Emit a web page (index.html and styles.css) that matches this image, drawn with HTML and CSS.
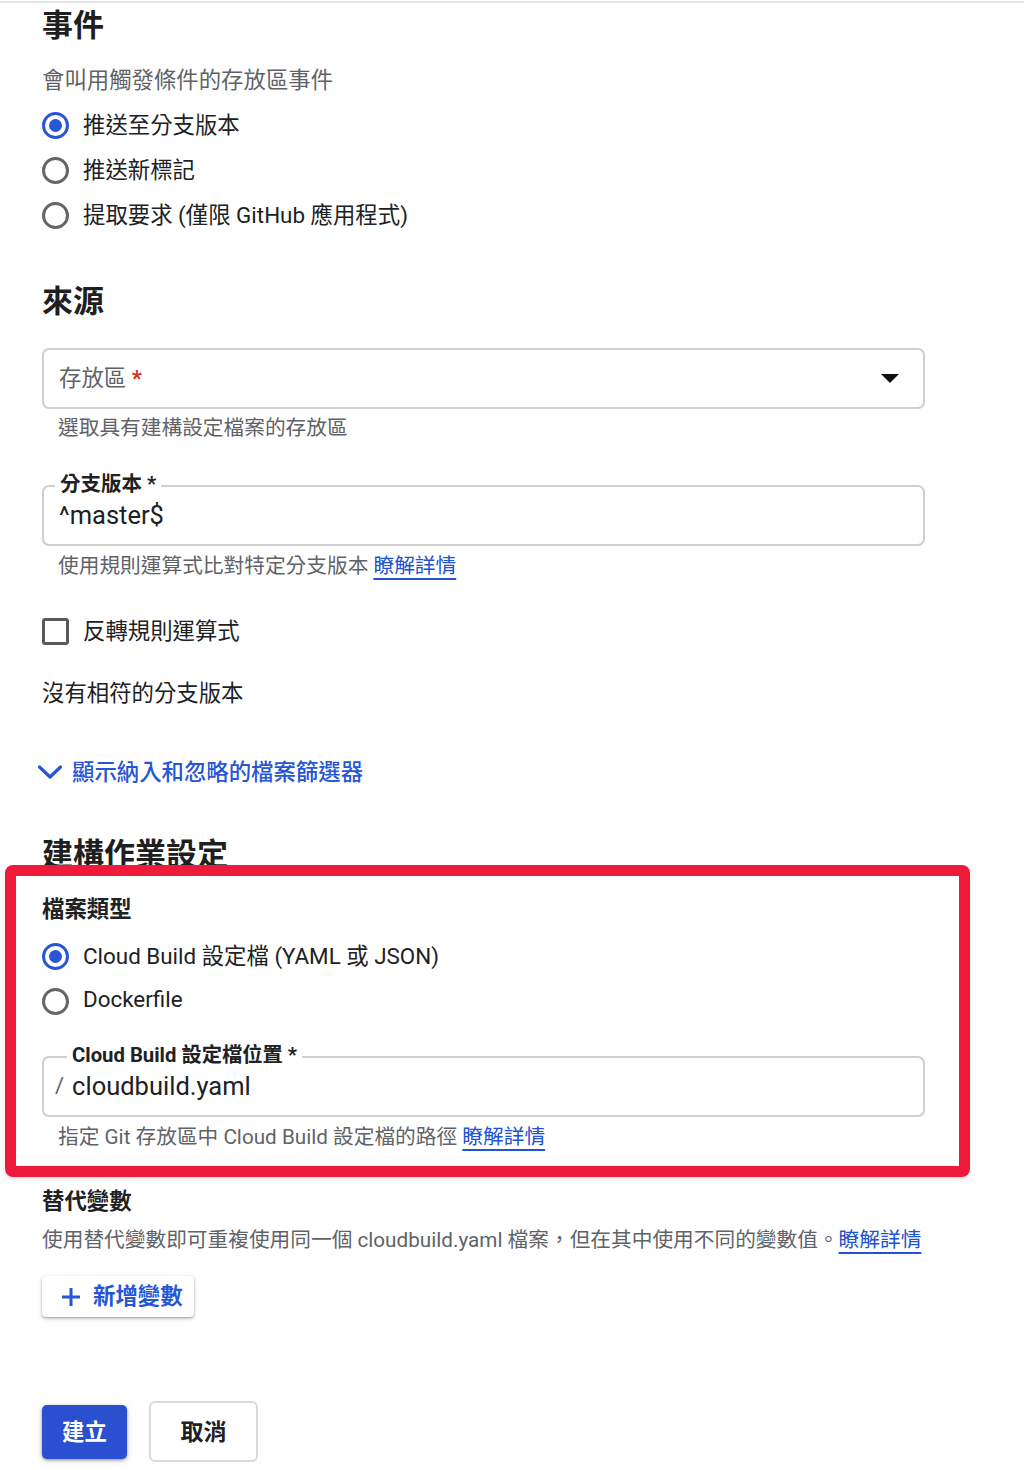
FILE: index.html
```html
<!DOCTYPE html>
<html lang="zh-Hant">
<head>
<meta charset="utf-8">
<link rel="stylesheet" href="styles.css">
</head>
<body>
<div class="topline"></div>
<main class="page">
  <h2 class="heading">事件</h2>
  <p class="subtitle">會叫用觸發條件的存放區事件</p>
  <div class="radios">
    <label class="radio-row"><span class="radio checked"></span><span class="txt">推送至分支版本</span></label>
    <label class="radio-row"><span class="radio"></span><span class="txt">推送新標記</span></label>
    <label class="radio-row"><span class="radio"></span><span class="txt">提取要求 (僅限 GitHub 應用程式)</span></label>
  </div>

  <h2 class="heading h-source">來源</h2>
  <div class="select">
    <span class="select-label txt">存放區 <span class="req">*</span></span>
    <span class="arrow"></span>
  </div>
  <p class="helper h-repo">選取具有建構設定檔案的存放區</p>

  <div class="field f-branch">
    <span class="float-label">分支版本 *</span>
    <span class="value">^master$</span>
  </div>
  <p class="helper h-branch">使用規則運算式比對特定分支版本 <a class="link">瞭解詳情</a></p>

  <label class="check-row"><span class="checkbox"></span><span class="txt">反轉規則運算式</span></label>
  <p class="plain">沒有相符的分支版本</p>

  <div class="expander">
    <svg width="26" height="16" viewBox="0 0 26 16"><path d="M2.5 3 L13 13 L23.5 3" fill="none" stroke="#2656d6" stroke-width="3.2" stroke-linecap="round" stroke-linejoin="round"/></svg>
    <span class="txt">顯示納入和忽略的檔案篩選器</span>
  </div>

  <h2 class="heading h-build">建構作業設定</h2>
  <p class="label-strong l-type">檔案類型</p>
  <div class="radios r-type">
    <label class="radio-row"><span class="radio checked"></span><span class="txt">Cloud Build 設定檔 (YAML 或 JSON)</span></label>
    <label class="radio-row"><span class="radio"></span><span class="txt">Dockerfile</span></label>
  </div>

  <div class="field f-config">
    <span class="float-label fl-config">Cloud Build 設定檔位置 *</span>
    <span class="prefix">/</span><span class="value">cloudbuild.yaml</span>
  </div>
  <p class="helper h-config">指定 Git 存放區中 Cloud Build 設定檔的路徑 <a class="link">瞭解詳情</a></p>

  <p class="label-strong l-subs">替代變數</p>
  <p class="desc">使用替代變數即可重複使用同一個 cloudbuild.yaml 檔案，但在其中使用不同的變數值。<a class="link">瞭解詳情</a></p>

  <button class="add-btn">
    <svg width="20" height="20" viewBox="0 0 20 20"><path d="M10 1 V19 M1 10 H19" stroke="#2656d6" stroke-width="3" fill="none"/></svg>
    <span class="txt">新增變數</span>
  </button>

  <div class="actions">
    <button class="btn-primary">建立</button>
    <button class="btn-secondary">取消</button>
  </div>

  <div class="highlight"></div>
</main>
</body>
</html>
```
FILE: styles.css
```css
* { box-sizing: border-box; }
html, body { margin: 0; padding: 0; background: #fff; }
body {
  font-family: Roboto, "Noto Sans CJK TC", sans-serif;
  color: #202124;
  width: 1024px;
  height: 1470px;
  overflow: hidden;
}
.topline { height: 2px; margin-top: 1px; background: #e2e2e2; }
.page { position: relative; padding-left: 42px; width: 925px; }
p { margin: 0; }
.txt { padding-bottom: 5px; }

.heading { margin: 0; height: 44px; line-height: 45px; font-size: 31px; font-weight: 700; color: #1f1f1f; }
.subtitle { margin-top: 16px; height: 34px; line-height: 35px; font-size: 22.4px; color: #5f6368; }

.radios { margin-top: 6px; display: flex; flex-direction: column; }
.radio-row { display: flex; align-items: center; gap: 14px; height: 45px; font-size: 22.4px; color: #202124; }
.radio { width: 27px; height: 27px; border-radius: 50%; border: 3px solid #666; flex: none; display: flex; align-items: center; justify-content: center; }
.radio.checked { border-color: #2a56d6; }
.radio.checked::after { content: ""; width: 13px; height: 13px; border-radius: 50%; background: #2a56d6; }

.h-source { margin-top: 41px; }

.select {
  margin-top: 25px; height: 61px; border: 2px solid #cfcfcf; border-radius: 7px;
  display: flex; align-items: center; justify-content: space-between; padding: 0 24px 0 15px;
}
.select-label { font-size: 22.4px; color: #5f6368; }
.req { color: #d93025; font-weight: 700; }
.arrow { width: 0; height: 0; border-left: 9px solid transparent; border-right: 9px solid transparent; border-top: 9px solid #111; }

.helper { height: 28px; line-height: 29px; font-size: 20.7px; color: #5f6368; padding-left: 16px; }
.h-repo { margin-top: 5px; }
.h-branch { margin-top: 6px; }
.h-config { margin-top: 6px; }
.link { color: #2152d1; text-decoration: underline; text-decoration-thickness: 2px; text-underline-offset: 5px; }

.field {
  position: relative; height: 61px; border: 2px solid #cfcfcf; border-radius: 7px;
  display: flex; align-items: center; padding: 0 15px;
}
.f-branch { margin-top: 43px; }
.f-config { margin-top: 32px; padding-left: 11px; }
.float-label {
  position: absolute; top: -17px; left: 11px; padding: 0 5px; background: #fff;
  font-size: 20.5px; font-weight: 700; line-height: 28px; color: #202124;
}
.fl-config { left: 23px; font-size: 20.3px; }
.value { font-size: 25.5px; color: #202124; padding-bottom: 2px; }
.prefix { font-size: 22px; color: #5f6368; margin-right: 8px; padding-bottom: 2px; }

.check-row { margin-top: 29px; display: flex; align-items: center; gap: 14px; height: 44px; font-size: 22.4px; }
.checkbox { width: 27px; height: 27px; border: 3px solid #5a5a5a; border-radius: 3px; flex: none; }

.plain { margin-top: 23px; height: 34px; line-height: 34px; font-size: 22.4px; color: #202124; }

.expander { margin-top: 45px; margin-left: -5px; height: 34px; display: flex; align-items: center; gap: 9px; font-size: 22.4px; font-weight: 500; color: #2656d6; }

.h-build { margin-top: 43px; }
.label-strong { height: 34px; line-height: 33px; font-size: 22.4px; font-weight: 700; color: #202124; }
.l-type { margin-top: 17px; }
.r-type { margin-top: 7px; }
.l-subs { margin-top: 34px; }
.desc { margin-top: 7px; height: 30px; line-height: 29px; font-size: 20.7px; color: #5f6368; white-space: nowrap; }

.add-btn {
  margin-top: 20px; height: 41px; width: 152px; border: none; border-radius: 4px; background: #fff;
  box-shadow: 0 1px 2px rgba(0,0,0,0.3), 0 2px 5px rgba(0,0,0,0.15);
  display: flex; align-items: center; gap: 12px; padding: 0 0 0 19px;
  font-family: inherit; font-size: 22.4px; font-weight: 700; color: #2656d6;
}

.actions { margin-top: 84px; display: flex; align-items: center; gap: 22px; }
.btn-primary {
  width: 85px; height: 54px; border: none; border-radius: 5px; background: #2a4fcf; color: #fff;
  font-family: inherit; font-size: 22.4px; font-weight: 700; padding: 0 0 4px;
  box-shadow: 0 1px 3px rgba(0,0,0,0.35), 0 2px 6px rgba(0,0,0,0.15);
}
.btn-secondary {
  width: 109px; height: 61px; border: 2px solid #dadada; border-radius: 6px; background: #fff; color: #202124;
  font-family: inherit; font-size: 23px; font-weight: 700; padding: 0 0 4px;
}

.highlight {
  position: absolute; left: 5px; top: 862px; width: 965px; height: 312px;
  border: 11px solid #ef1a39; border-radius: 8px;
  box-shadow: 0 2px 4px rgba(0,0,0,0.12);
  pointer-events: none;
}
```
